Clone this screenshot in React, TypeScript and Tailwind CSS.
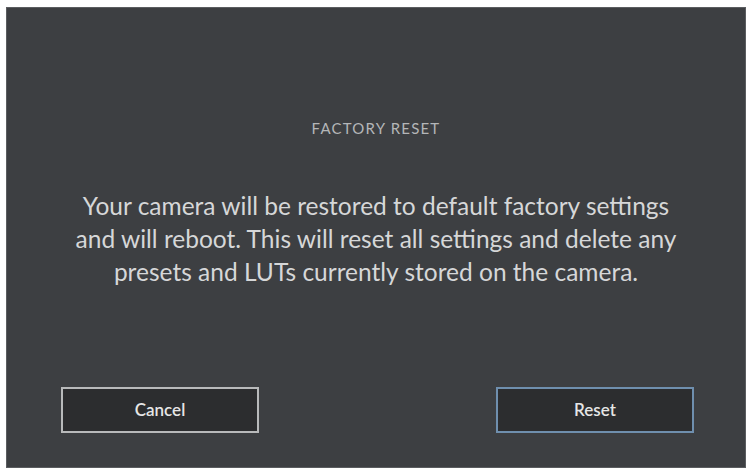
import React from 'react';

export default function App() {
  return (
    <div className="w-[751px] h-[471px] bg-white pt-[7px] pl-[6px]" style={{ fontFamily: 'Lato, "Open Sans", sans-serif' }}>
      <div className="w-[740px] h-[461px] bg-[#3d3f42] border border-[#5b5d60] flex flex-col items-center">
        {/* title */}
        <div className="mt-[113px] text-[15px] tracking-[0.08em] text-[#b4b6b8] leading-none">
          FACTORY RESET
        </div>

        {/* message */}
        <p className="mt-[53px] text-[24.5px] leading-[33px] text-[#d6d7d8] text-center whitespace-nowrap">
          Your camera will be restored to default factory settings
          <br />
          and will reboot. This will reset all settings and delete any
          <br />
          presets and LUTs currently stored on the camera.
        </p>

        {/* actions */}
        <div className="mt-auto mb-[34px] w-full flex justify-between pl-[54px] pr-[51px]">
          <button className="w-[198px] h-[46px] bg-[#2c2d2f] border-2 border-[#b9babb] text-[#e6e6e6] text-[17px] font-semibold">
            Cancel
          </button>
          <button className="w-[198px] h-[46px] bg-[#2c2d2f] border-2 border-[#6f8fae] text-[#e6e6e6] text-[17px] font-semibold">
            Reset
          </button>
        </div>
      </div>
    </div>
  );
}
